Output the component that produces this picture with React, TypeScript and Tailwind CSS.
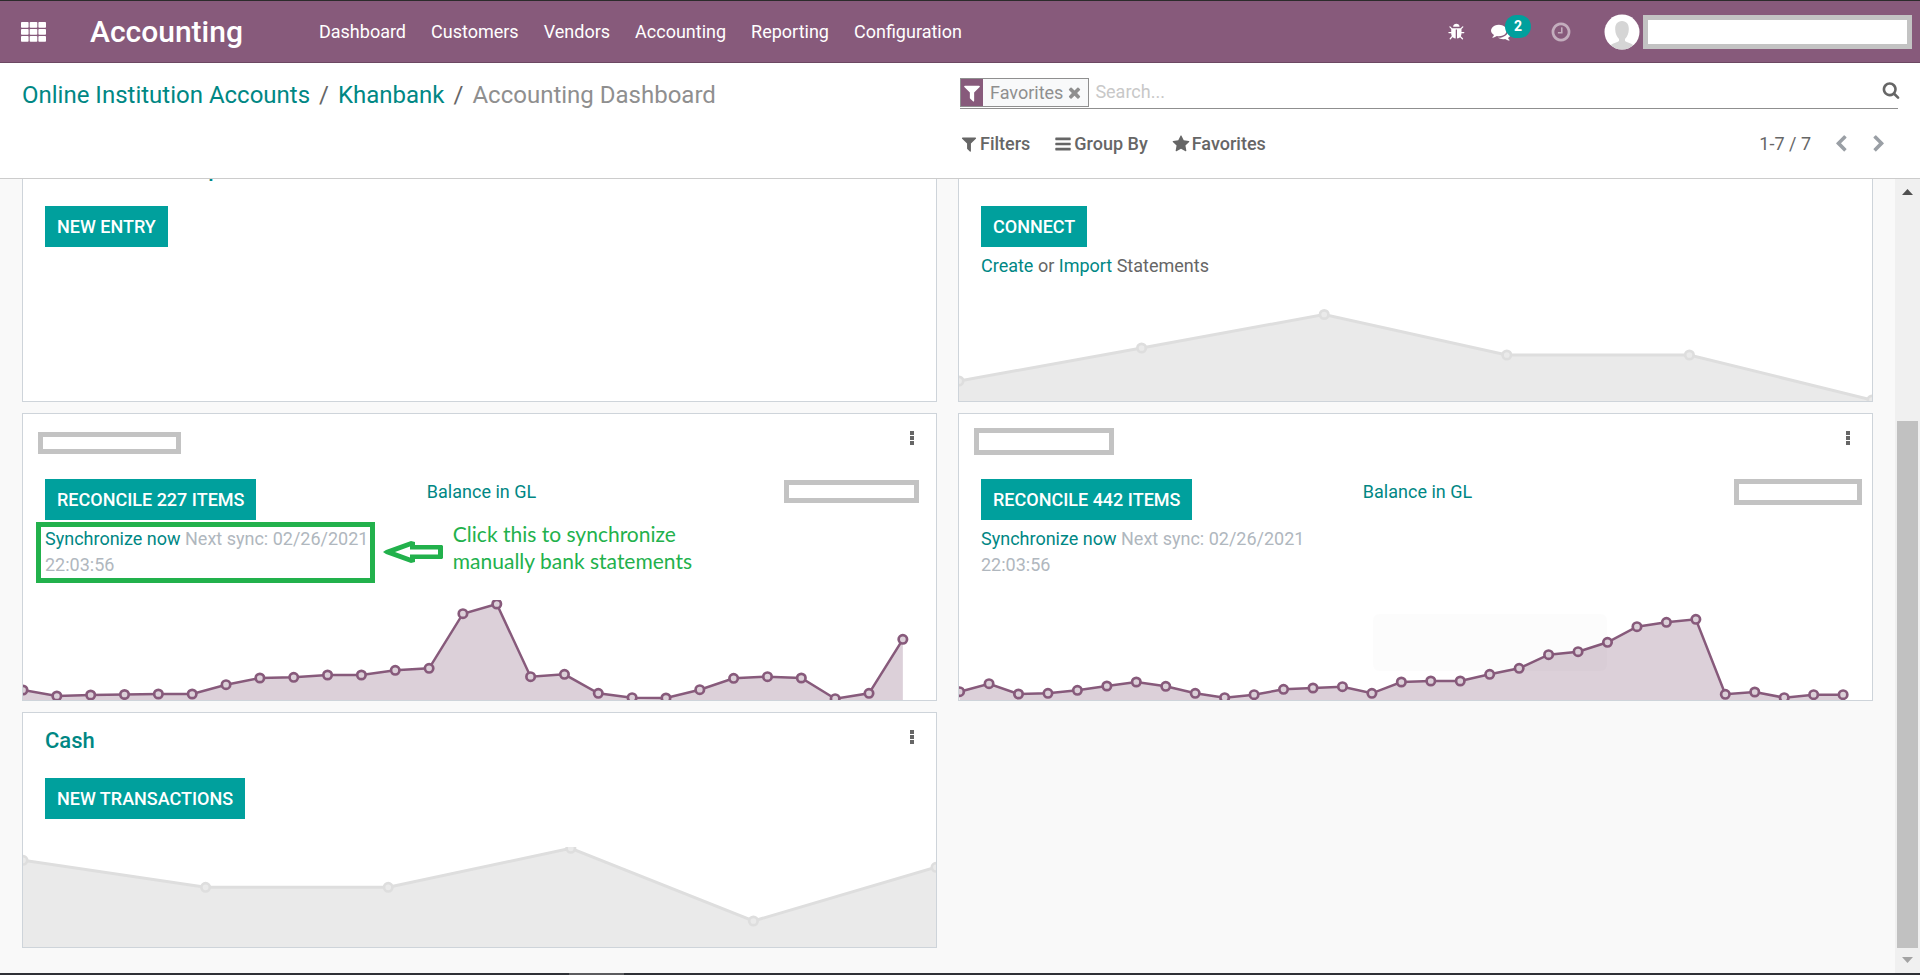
import React from "react";

const ICONS = {
  bug: "M1632 960q0 26-19 45t-45 19h-224q0 171-67 290l208 209q19 19 19 45t-19 45q-18 19-45 19t-45-19l-198-197q-5 5-15 13t-42 28.5-65 36.5-82 29-97 13v-896h-128v896q-51 0-101.5-13.5t-87-33-66-39-43.5-32.5l-15-14-183 207q-20 21-48 21-24 0-43-16-19-18-20.5-44.5t15.5-46.5l202-227q-58-114-58-274h-224q-26 0-45-19t-19-45 19-45 45-19h224v-294l-173-173q-19-19-19-45t19-45 45-19 45 19l173 173h844l173-173q19-19 45-19t45 19 19 45-19 45l-173 173v294h224q26 0 45 19t19 45zm-480-576h-640q0-133 93.5-226.5t226.5-93.5 226.5 93.5 93.5 226.5z",
  filter: "M1595 295q17 41-14 70l-493 493v742q0 42-39 59-13 5-25 5-27 0-45-19l-256-256q-19-19-19-45v-486l-493-493q-31-29-14-70 17-39 59-39h1280q42 0 59 39z",
  bars: "M1664 1344v128q0 26-19 45t-45 19h-1408q-26 0-45-19t-19-45v-128q0-26 19-45t45-19h1408q26 0 45 19t19 45zm0-512v128q0 26-19 45t-45 19h-1408q-26 0-45-19t-19-45v-128q0-26 19-45t45-19h1408q26 0 45 19t19 45zm0-512v128q0 26-19 45t-45 19h-1408q-26 0-45-19t-19-45v-128q0-26 19-45t45-19h1408q26 0 45 19t19 45z",
  star: "M1728 647q0 22-26 48l-363 354 86 500q1 7 1 20 0 21-10.5 35.5t-30.5 14.5q-19 0-40-12l-449-236-449 236q-22 12-40 12-21 0-31.5-14.5t-10.5-35.5q0-6 2-20l86-500-364-354q-25-27-25-48 0-37 56-46l502-73 225-455q19-41 49-41t49 41l225 455 502 73q56 9 56 46z",
  search: "M1216 832q0-185-131.5-316.5t-316.5-131.5-316.5 131.5-131.5 316.5 131.5 316.5 316.5 131.5 316.5-131.5 131.5-316.5zm512 832q0 52-38 90t-90 38q-54 0-90-38l-343-342q-179 124-399 124-143 0-273.5-55.5t-225-150-150-225-55.5-273.5 55.5-273.5 150-225 225-150 273.5-55.5 273.5 55.5 225 150 150 225 55.5 273.5q0 220-124 399l343 343q37 37 37 90z",
  comments: "M1408 768q0 139-94 257t-256.5 186.5-353.5 68.5q-86 0-176-16-124 88-278 128-36 9-86 16h-3q-11 0-20.5-8t-11.5-21q-1-3-1-6.5t.5-6.5 2-6l2.5-5 3.5-5.5 4-5 4.5-5 4-4.5q5-6 23-25t26-29.5 22.5-29 25-38.5 20.5-44q-124-72-195-177t-71-224q0-139 94-257t256.5-186.5 353.5-68.5 353.5 68.5 256.5 186.5 94 257zm384 256q0 120-71 224.5t-195 176.5q10 24 20.5 44t25 38.5 22.5 29 26 29.5 23 25q1 1 4 4.5t4.5 5 4 5 3.5 5.5l2.5 5 2 6 .5 6.5-1 6.5q-3 14-13 22t-22 7q-50-7-86-16-154-40-278-128-90 16-176 16-271 0-472-132 58 4 88 4 161 0 309-45t264-129q125-92 192-212t67-254q0-77-23-152 129 71 204 178t75 230z",
  clock: "M1024 544v448q0 14-9 23t-23 9h-320q-14 0-23-9t-9-23v-64q0-14 9-23t23-9h224v-352q0-14 9-23t23-9h64q14 0 23 9t9 23zm416 352q0-148-73-273t-198-198-273-73-273 73-198 198-73 273 73 273 198 198 273 73 273-73 198-198 73-273zm224 0q0 209-103 385.5t-279.5 279.5-385.5 103-385.5-103-279.5-279.5-103-385.5 103-385.5 279.5-279.5 385.5-103 385.5 103 279.5 279.5 103 385.5z",
  times: "M1490 1322q0 40-28 68l-136 136q-28 28-68 28t-68-28l-294-294-294 294q-28 28-68 28t-68-28l-136-136q-28-28-28-68t28-68l294-294-294-294q-28-28-28-68t28-68l136-136q28-28 68-28t68 28l294 294 294-294q28-28 68-28t68 28l136 136q28 28 28 68t-28 68l-294 294 294 294q28 28 28 68z",
  left: "M1427 301l-531 531 531 531q19 19 19 45t-19 45l-166 166q-19 19-45 19t-45-19l-742-742q-19-19-19-45t19-45l742-742q19-19 45-19t45 19l166 166q19 19 19 45t-19 45z",
  right: "M1363 877l-742 742q-19 19-45 19t-45-19l-166-166q-19-19-19-45t19-45l531-531-531-531q-19-19-19-45t19-45l166-166q19-19 45-19t45 19l742 742q19 19 19 45t-19 45z",
};

function Icon({ name, className }: { name: keyof typeof ICONS; className: string }) {
  return (
    <svg viewBox="0 0 1792 1792" className={`shrink-0 ${className}`} fill="currentColor" aria-hidden="true">
      <path d={ICONS[name]} />
    </svg>
  );
}

const MENU = ["Dashboard", "Customers", "Vendors", "Accounting", "Reporting", "Configuration"];

function TopBar() {
  return (
    <header className="flex h-[63px] items-center border-t border-b border-t-[#2b2b2b] border-b-[#6c4862] bg-[#875a7b] pr-2 pl-[21px] text-white">
      <button aria-label="Apps">
        <svg width="25" height="20" viewBox="0 0 25 20" fill="currentColor" aria-hidden="true">
          {[0, 7, 14].map((y) =>
            [0, 8.7, 17.4].map((x) => <rect key={`${x}-${y}`} x={x} y={y} width="7.6" height="5.8" rx="0.8" />),
          )}
        </svg>
      </button>
      <a href="#accounting" className="ml-11 text-[30px] font-medium">
        Accounting
      </a>
      <nav className="ml-[76px] flex gap-[25px]">
        {MENU.map((item) => (
          <a key={item} href={`#${item.toLowerCase()}`}>
            {item}
          </a>
        ))}
      </nav>
      <div className="ml-auto flex items-center">
        <button aria-label="Debug">
          <Icon name="bug" className="size-[18px]" />
        </button>
        <button aria-label="Conversations" className="relative ml-[25px]">
          <Icon name="comments" className="size-5" />
          <span className="absolute -top-[7px] left-3.5 h-[23px] w-[26px] rounded-full bg-[#00a09d] text-[14px] leading-[23px] font-bold">
            2
          </span>
        </button>
        <button aria-label="Activities" className="ml-[39px] opacity-50">
          <Icon name="clock" className="size-[22px]" />
        </button>
        <svg viewBox="0 0 36 36" className="ml-8 size-9" aria-hidden="true">
          <clipPath id="avatar">
            <circle cx="18" cy="18" r="17.5" />
          </clipPath>
          <g clipPath="url(#avatar)">
            <rect width="36" height="36" fill="#fff" />
            <path
              d="M18 7c-5 0-7 4-6.800 8.500.1 4 1.400 7 3.800 9.500v2c-3 2-7 2-9.500 5.500L5 38h26l-.5-5.500C28 29 24 29 21 27v-2c2.400-2.500 3.700-5.500 3.800-9.500C25 11 23 7 18 7z"
              fill="#d5d5d5"
            />
          </g>
        </svg>
        <div className="ml-[3px] h-[34px] w-[269px] border-5 border-[#c3c3c3] bg-white" />
      </div>
    </header>
  );
}

function ControlPanel() {
  return (
    <section className="grid h-[116px] grid-cols-2 border-b border-[#ccc] bg-white">
      <nav aria-label="Breadcrumb" className="pt-[15px] pl-[22px] text-[24px] leading-[34px] text-[#8f8f8f]">
        <a href="#accounts" className="text-[#008784]">Online Institution Accounts</a>
        <span className="px-[9px] text-[#666]">/</span>
        <a href="#khanbank" className="text-[#008784]">Khanbank</a>
        <span className="px-[9px] text-[#666]">/</span>
        <span>Accounting Dashboard</span>
      </nav>
      <div className="pt-[15px] pr-[22px]">
        <div className="flex h-[31px] items-start border-b border-[#8f8f8f]">
          <div className="flex h-[29px] items-center border border-[#8f8f8f] bg-[#f8f9fa] pr-[5px] text-[#8f8f8f]">
            <span className="flex h-full w-[22px] items-center justify-center bg-[#875a7b] text-white">
              <Icon name="filter" className="size-5" />
            </span>
            <span className="pr-[3px] pl-[7px]">Favorites</span>
            <button aria-label="Remove filter">
              <Icon name="times" className="size-[17px]" />
            </button>
          </div>
          <input
            aria-label="Search"
            placeholder="Search..."
            className="h-[27px] min-w-0 flex-1 pl-1.5 outline-none placeholder:text-[#c8c8c8]"
          />
          <button aria-label="Run search" className="-mr-0.5 pt-[3px] text-[#666]">
            <Icon name="search" className="size-[18px]" />
          </button>
        </div>
        <div className="flex items-center pt-[22px] pr-2.5 leading-[26px] text-[#666]">
          <button className="flex items-center gap-0.5 font-medium">
            <Icon name="filter" className="size-[18px]" />
            Filters
          </button>
          <button className="ml-6 flex items-center gap-0.5 font-medium">
            <Icon name="bars" className="size-[18px]" />
            Group By
          </button>
          <button className="ml-6 flex items-center gap-0.5 font-medium">
            <Icon name="star" className="size-[18px]" />
            Favorites
          </button>
          <span className="ml-auto">1-7 / 7</span>
          <button aria-label="Previous" className="ml-[21px] text-[#9a9fa5]">
            <Icon name="left" className="size-[18px]" />
          </button>
          <button aria-label="Next" className="ml-5 text-[#9a9fa5]">
            <Icon name="right" className="size-[18px]" />
          </button>
        </div>
      </div>
    </section>
  );
}

type Tone = "gray" | "purple";

function Chart({ values, start, step, tone }: { values: number[]; start: number; step: number; tone: Tone }) {
  const pts = values.map((y, i) => [start + i * step, y]);
  const line = pts.map(([x, y]) => `${x},${y}`).join(" ");
  const stroke = tone === "gray" ? "#dedede" : "#875a7b";
  const fill = tone === "gray" ? "#eaeaea" : "#dcd0d9";
  return (
    <svg
      viewBox="0 0 913 100"
      preserveAspectRatio="none"
      className="mt-auto block h-[100px] w-full"
      role="img"
      aria-label="Balance history"
    >
      <polygon points={`${start},100 ${line} ${pts[pts.length - 1][0]},100`} fill={fill} />
      <polyline points={line} fill="none" stroke={stroke} strokeWidth={tone === "gray" ? 3 : 2.5} />
      {pts.map(([x, y]) => (
        <circle key={x} cx={x} cy={y} r="4.200" fill={fill} stroke={stroke} strokeWidth="2.700" />
      ))}
    </svg>
  );
}

function Card({
  title,
  header,
  className,
  children,
}: {
  title?: string;
  header?: React.ReactNode;
  className: string;
  children: React.ReactNode;
}) {
  return (
    <article className={`flex flex-col border border-[#ced4da] bg-white ${className}`}>
      <div className="flex h-[65px] shrink-0 items-start justify-between pr-[22px]">
        {header}
        {title && (
          <h2 className="pt-3 pl-[22px] text-[22px] leading-[32px] font-medium text-[#008784]">{title}</h2>
        )}
        <button aria-label="More options" className="mt-[17px] ml-auto flex flex-col gap-px">
          <span className="size-1 bg-[#666]" />
          <span className="size-1 bg-[#666]" />
          <span className="size-1 bg-[#666]" />
        </button>
      </div>
      {children}
    </article>
  );
}

function Action({ children }: { children: React.ReactNode }) {
  return (
    <button className="block h-[41px] bg-[#00a09d] px-3 font-medium whitespace-nowrap text-white uppercase">
      {children}
    </button>
  );
}

function SyncBlock({ count, balance, note }: { count: number; balance: React.ReactNode; note?: React.ReactNode }) {
  return (
    <div className="grid grid-cols-[3fr_4fr] pl-[22px]">
      <div className="relative">
        <Action>Reconcile {count} items</Action>
        <p className="pt-1.5 pr-10 text-[#b0b7be]">
          <a href="#sync" className="text-[#008784]">Synchronize now</a> Next sync: 02/26/2021 22:03:56
        </p>
        {note && <div className="absolute top-[43px] -left-[9px] h-[61px] w-[339px] border-5 border-[#22b14c]" />}
      </div>
      <div className="relative">
        <div className="flex items-start justify-between">
          <a href="#balance" className="text-[#008784]">Balance in GL</a>
          {balance}
        </div>
        {note}
      </div>
    </div>
  );
}

const SYNC_A = [
  90, 96, 95, 94.5, 94, 94, 84.7, 78, 77.3, 75, 75, 70.3, 68.3, 13.7, 4, 76.7, 74.3, 93.3, 97.7, 98, 89.7, 78.3, 76.7,
  78, 98.7, 93.3, 39.3,
];
const SYNC_B = [
  91.7, 83.7, 94, 93.3, 90.3, 86, 82, 86.3, 93.3, 97.7, 94.7, 89.3, 88, 86.7, 93.3, 82, 81, 81, 74.3, 68.3, 54.7, 51.7,
  42.3, 26.7, 22.3, 19.3, 94.3, 92, 97.7, 94.7, 94.7,
];

function Note() {
  return (
    <div className="absolute top-[41px] -left-11 flex items-center gap-2.5">
      <svg width="60" height="22" viewBox="0 0 60 22" className="mt-2.5" aria-hidden="true">
        <path
          d="M0 11L3 9 28 0 32 1V4H59L60 5V17L59 18H32V21L28 22 3 13ZM12 11L27 16.500V13.500H55V8.500H27V5.500Z"
          fill="#22b14c"
          fillRule="evenodd"
        />
      </svg>
      <p className="font-[Lato,sans-serif] text-[21px] leading-[27px] whitespace-nowrap text-[#22b14c]">
        Click this to synchronize
        <br />
        manually bank statements
      </p>
    </div>
  );
}

function ScrollRail() {
  return (
    <div className="flex w-[25px] shrink-0 flex-col items-center bg-[#f0f0f0] py-2.5" aria-hidden="true">
      <svg width="11" height="6" viewBox="0 0 11 6">
        <path d="M5.500 0L11 6H0z" fill="#505050" />
      </svg>
      <div className="grow-[226]" />
      <div className="w-[21px] grow-[526] bg-[#c1c1c1]" />
      <div className="h-[9px]" />
      <svg width="11" height="6" viewBox="0 0 11 6">
        <path d="M5.500 6L0 0h11z" fill="#a3a3a3" />
      </svg>
    </div>
  );
}

export default function App() {
  return (
    <div className="flex h-screen flex-col overflow-hidden bg-[#f9f9f9] font-[Roboto,sans-serif] text-[18px] leading-[26px] text-[#666]">
      <TopBar />
      <ControlPanel />
      <div className="flex min-h-0 flex-1">
        <main className="min-w-0 flex-1 overflow-hidden">
          <div className="-mt-[39px] grid grid-cols-2 gap-x-[21px] gap-y-[11px] px-[22px]">
            <Card title="Miscellaneous Operations" className="h-[262px]">
              <div className="pl-[22px]">
                <Action>New entry</Action>
              </div>
            </Card>
            <Card className="h-[262px]">
              <div className="pl-[22px]">
                <Action>Connect</Action>
                <p className="pt-1.5">
                  <a href="#create" className="text-[#008784]">Create</a> or{" "}
                  <a href="#import" className="text-[#008784]">Import</a> Statements
                </p>
              </div>
              <Chart values={[80, 47, 13.5, 54, 54, 99]} start={0} step={182.6} tone="gray" />
            </Card>
            <Card
              className="h-[288px]"
              header={<div className="mt-[18px] ml-[15px] h-[22px] w-[143px] border-5 border-[#c3c3c3]" />}
            >
              <SyncBlock
                count={227}
                balance={<div className="mt-px mr-[17px] h-[23px] w-[135px] border-5 border-[#c3c3c3]" />}
                note={<Note />}
              />
              <Chart values={SYNC_A} start={0} step={33.84} tone="purple" />
            </Card>
            <Card
              className="relative h-[288px]"
              header={<div className="mt-3.5 ml-[15px] h-[27px] w-[140px] border-5 border-[#c3c3c3]" />}
            >
              <SyncBlock
                count={442}
                balance={<div className="mr-2.5 h-[26px] w-32 border-5 border-[#c3c3c3]" />}
              />
              <Chart values={SYNC_B} start={0.6} step={29.45} tone="purple" />
              <div className="absolute top-[200px] left-[414px] h-[57px] w-[234px] rounded-md bg-black/[0.012]" />
            </Card>
            <Card title="Cash" className="h-[236px]">
              <div className="pl-[22px]">
                <Action>New transactions</Action>
              </div>
              <Chart values={[13.3, 40.3, 40.3, 1.3, 74, 20.3]} start={0} step={182.6} tone="gray" />
            </Card>
          </div>
        </main>
        <ScrollRail />
      </div>
      <footer className="flex h-0.5 shrink-0 bg-[#2f3136]">
        <div className="ml-[569px] w-[55px] bg-[#5c5c5f]" />
      </footer>
    </div>
  );
}
